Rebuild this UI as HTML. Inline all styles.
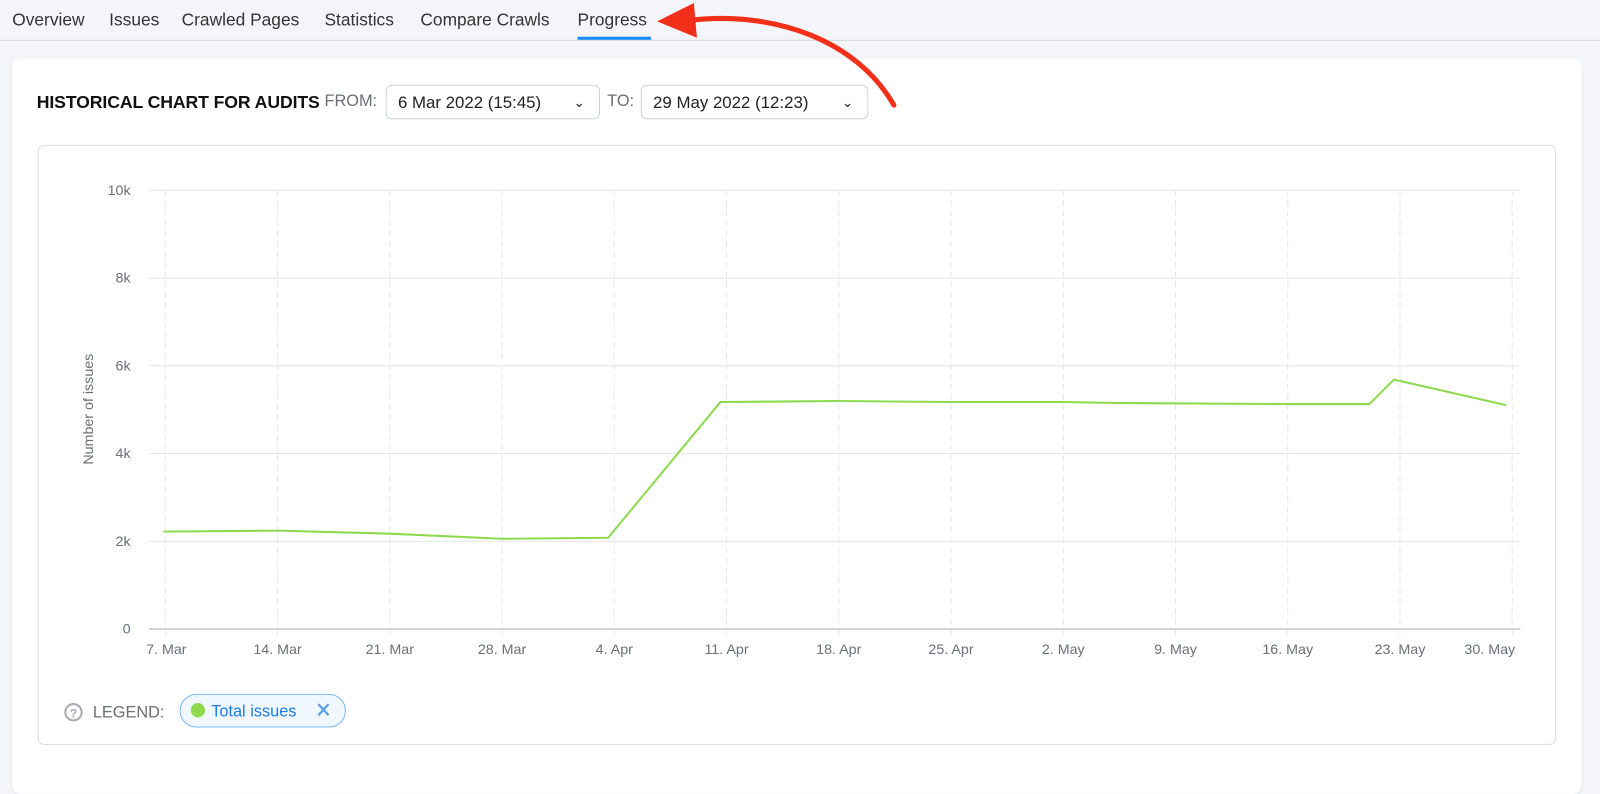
<!DOCTYPE html>
<html><head><meta charset="utf-8"><style>
body{margin:0;width:1600px;height:759px;background:#f4f5f9;font-family:"Liberation Sans",sans-serif;overflow:hidden;color:#333}
#w{position:absolute;left:0;top:0;width:1568px;height:744px;transform:scale(1.0204);transform-origin:0 0}
.tabs{position:absolute;top:0;left:0;width:1568px;height:39px;border-bottom:1px solid #d6d8de}
.tab{position:absolute;top:10px;font-size:17px;color:#333}
.card{position:absolute;left:12px;top:58px;width:1538px;height:720px;background:#fff;border-radius:8px;box-shadow:0 1px 2px rgba(0,0,0,.06)}
.sel{position:absolute;top:83px;height:34px;border:1px solid #cfd2d8;border-radius:6px;background:#fff;font-size:16.5px;line-height:34px;padding-left:11px;box-sizing:border-box;color:#222}
.lbl{position:absolute;top:91px;font-size:16px;color:#6b6f7a}
.box{position:absolute;left:37px;top:142px;width:1488px;height:588px;border:1px solid #dcdde2;border-radius:6px;box-sizing:border-box}
</style></head><body><div id="w">
<div class="tabs">
<span class="tab" style="left:12px">Overview</span>
<span class="tab" style="left:107px">Issues</span>
<span class="tab" style="left:178px">Crawled Pages</span>
<span class="tab" style="left:318px">Statistics</span>
<span class="tab" style="left:412px">Compare Crawls</span>
<span class="tab" style="left:566px">Progress</span>
<div style="position:absolute;left:566px;top:36px;width:72px;height:3px;background:#1a8cff"></div>
</div>
<div class="card"></div>
<div style="position:absolute;left:36px;top:90px;font-size:17.3px;font-weight:bold;color:#111;letter-spacing:-0.1px">HISTORICAL CHART FOR AUDITS</div>
<div class="lbl" style="left:318px">FROM:</div>
<div class="sel" style="left:378px;width:210px">6 Mar 2022 (15:45)<span style="position:absolute;right:14px;font-size:13px">&#8964;</span></div>
<div class="lbl" style="left:595px">TO:</div>
<div class="sel" style="left:628px;width:223px">29 May 2022 (12:23)<span style="position:absolute;right:14px;font-size:13px">&#8964;</span></div>
<div class="box"></div>
<svg width="1568" height="744" style="position:absolute;left:0;top:0" font-family="Liberation Sans,sans-serif">
<g stroke="#e6e7eb" stroke-width="1">
<line x1="146" y1="186.5" x2="1490" y2="186.5"/><line x1="146" y1="272.5" x2="1490" y2="272.5"/><line x1="146" y1="358.5" x2="1490" y2="358.5"/><line x1="146" y1="444.5" x2="1490" y2="444.5"/><line x1="146" y1="530.5" x2="1490" y2="530.5"/>
</g>
<g stroke="#e6e7eb" stroke-dasharray="6,4">
<line x1="162" y1="186" x2="162" y2="624"/><line x1="272" y1="186" x2="272" y2="624"/><line x1="382" y1="186" x2="382" y2="624"/><line x1="492" y1="186" x2="492" y2="624"/><line x1="602" y1="186" x2="602" y2="624"/><line x1="712" y1="186" x2="712" y2="624"/><line x1="822" y1="186" x2="822" y2="624"/><line x1="932" y1="186" x2="932" y2="624"/><line x1="1042" y1="186" x2="1042" y2="624"/><line x1="1152" y1="186" x2="1152" y2="624"/><line x1="1262" y1="186" x2="1262" y2="624"/><line x1="1372" y1="186" x2="1372" y2="624"/><line x1="1482" y1="186" x2="1482" y2="624"/>
</g>
<line x1="146" y1="616.5" x2="1490" y2="616.5" stroke="#c8cad2" stroke-width="1.5"/>
<g font-size="14" fill="#6b6f7a" text-anchor="end">
<text x="128" y="191">10k</text><text x="128" y="277">8k</text><text x="128" y="363">6k</text><text x="128" y="449">4k</text><text x="128" y="535">2k</text><text x="128" y="621">0</text>
</g>
<text transform="translate(91,401) rotate(-90)" font-size="14" fill="#6b6f7a" text-anchor="middle">Number of issues</text>
<g font-size="14" fill="#6b6f7a" text-anchor="middle">
<text x="163" y="641">7. Mar</text><text x="272" y="641">14. Mar</text><text x="382" y="641">21. Mar</text><text x="492" y="641">28. Mar</text><text x="602" y="641">4. Apr</text><text x="712" y="641">11. Apr</text><text x="822" y="641">18. Apr</text><text x="932" y="641">25. Apr</text><text x="1042" y="641">2. May</text><text x="1152" y="641">9. May</text><text x="1262" y="641">16. May</text><text x="1372" y="641">23. May</text><text x="1460" y="641">30. May</text>
</g>
<polyline fill="none" stroke="#8fd94f" stroke-width="2" points="160,521 272,520 382,523 492,528 596,527 706,394 822,393 932,394 1042,394 1100,395 1262,396 1342,396 1366,372 1476,397"/>
<circle cx="72" cy="698" r="8" fill="none" stroke="#a8abb4" stroke-width="2"/>
<text x="72" y="703" font-size="12" font-weight="bold" fill="#a8abb4" text-anchor="middle">?</text>
<text x="91" y="703" font-size="16" fill="#6b6f7a">LEGEND:</text>
<rect x="176.5" y="680.5" width="162" height="32" rx="16" fill="#f0f7ff" stroke="#7ab8f5"/>
<circle cx="194" cy="696" r="7" fill="#8fd94f"/>
<text x="207" y="702" font-size="16" fill="#1a7ee6">Total issues</text>
<path d="M312 690l10 11M322 690l-10 11" stroke="#5b9ee8" stroke-width="2.2"/>
<path d="M876 103 C840 40 760 10 675 20" fill="none" stroke="#f2301a" stroke-width="5" stroke-linecap="round"/>
<polygon points="644,21 680,3 683,37" fill="#f2301a"/>
</svg>
</div></body></html>
